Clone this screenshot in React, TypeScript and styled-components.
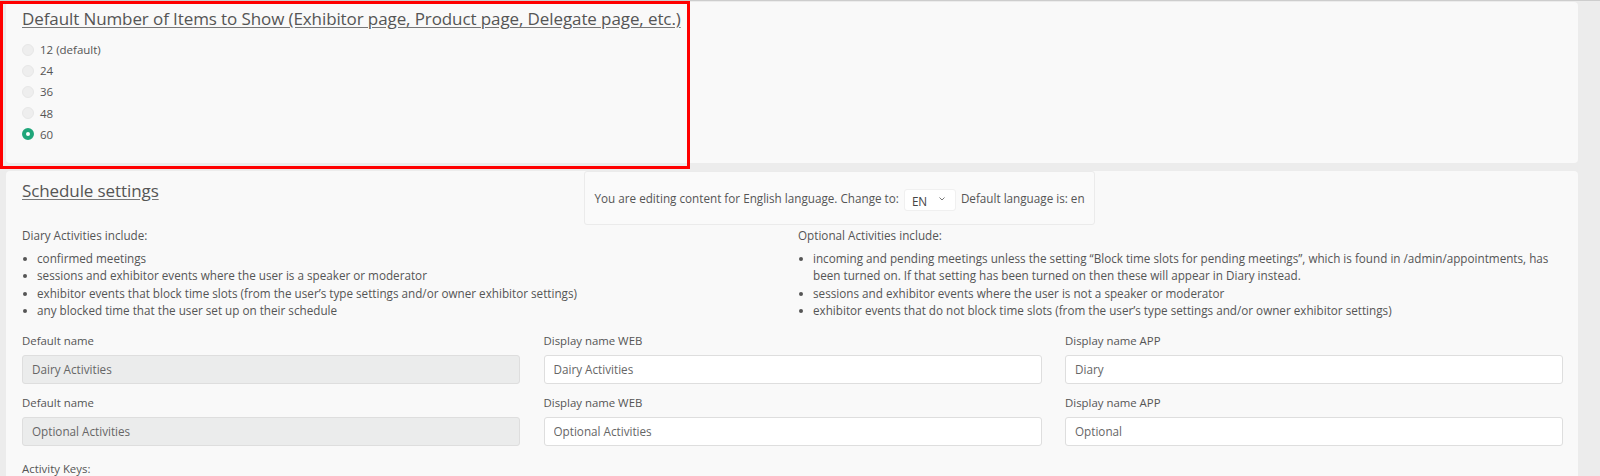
import styled, { createGlobalStyle } from "styled-components";

const GlobalStyle = createGlobalStyle`
  html, body {
    margin: 0;
    padding: 0;
    background: #ececec;
    font-family: "Open Sans", "Liberation Sans", sans-serif;
    color: #555;
  }
  * {
    box-sizing: border-box;
  }
`;

type ItemOption = {
  value: number;
  label: string;
};

const ITEM_OPTIONS: ItemOption[] = [
  { value: 12, label: "12 (default)" },
  { value: 24, label: "24" },
  { value: 36, label: "36" },
  { value: 48, label: "48" },
  { value: 60, label: "60" },
];

const DIARY_ITEMS = [
  "confirmed meetings",
  "sessions and exhibitor events where the user is a speaker or moderator",
  "exhibitor events that block time slots (from the user\u2019s type settings and/or owner exhibitor settings)",
  "any blocked time that the user set up on their schedule",
];

const OPTIONAL_ITEMS = [
  "incoming and pending meetings unless the setting \u201CBlock time slots for pending meetings\u201D, which is found in /admin/appointments, has been turned on. If that setting has been turned on then these will appear in Diary instead.",
  "sessions and exhibitor events where the user is not a speaker or moderator",
  "exhibitor events that do not block time slots (from the user\u2019s type settings and/or owner exhibitor settings)",
];

const NAME_ROWS = [
  { id: "diary", defaultName: "Dairy Activities", web: "Dairy Activities", app: "Diary" },
  { id: "optional", defaultName: "Optional Activities", web: "Optional Activities", app: "Optional" },
];

const App = () => {
  const selected = 60;

  return (
    <>
      <GlobalStyle />
      <Page>
        <ItemsCard>
          <SectionTitle>
            Default Number of Items to Show (Exhibitor page, Product page, Delegate page, etc.)
          </SectionTitle>
          <RadioList>
            {ITEM_OPTIONS.map((option) => (
              <RadioRow key={option.value}>
                <Radio $checked={option.value === selected} />
                <span>{option.label}</span>
              </RadioRow>
            ))}
          </RadioList>
        </ItemsCard>

        <ScheduleCard>
          <Header>
            <HeaderTitle>Schedule settings</HeaderTitle>
            <LanguageBox>
              <span>You are editing content for English language. Change to:</span>
              <LanguageSelect>
                <span>EN</span>
                <svg width="6" height="4" viewBox="0 0 6 4">
                  <polyline points="0.5,0.5 3,3 5.5,0.5" fill="none" stroke="#777" strokeWidth="1" />
                </svg>
              </LanguageSelect>
              <span>Default language is: en</span>
            </LanguageBox>
          </Header>

          <ActivityColumns>
            <div>
              <Intro>Diary Activities include:</Intro>
              <BulletList>
                {DIARY_ITEMS.map((item) => (
                  <Bullet key={item}>{item}</Bullet>
                ))}
              </BulletList>
            </div>
            <div>
              <Intro>Optional Activities include:</Intro>
              <BulletList>
                {OPTIONAL_ITEMS.map((item) => (
                  <Bullet key={item}>{item}</Bullet>
                ))}
              </BulletList>
            </div>
          </ActivityColumns>

          <NameGrid>
            {NAME_ROWS.flatMap((row) => [
              <Field key={row.id + "-default"}>
                <FieldLabel>Default name</FieldLabel>
                <TextInput $disabled readOnly value={row.defaultName} />
              </Field>,
              <Field key={row.id + "-web"}>
                <FieldLabel>Display name WEB</FieldLabel>
                <TextInput readOnly value={row.web} />
              </Field>,
              <Field key={row.id + "-app"}>
                <FieldLabel>Display name APP</FieldLabel>
                <TextInput readOnly value={row.app} />
              </Field>,
            ])}
          </NameGrid>

          <KeysLabel>Activity Keys:</KeysLabel>
        </ScheduleCard>

        <Highlight />
      </Page>
    </>
  );
};

const Page = styled.div`
  position: relative;
  border-top: 1px solid #cdcdcd;
  padding: 1px 22px 0 6px;
  height: 476px;
  overflow: hidden;
`;

const Highlight = styled.div`
  position: absolute;
  left: 0;
  top: 0;
  width: 690px;
  height: 168px;
  border: 3px solid #ff0000;
  pointer-events: none;
`;

const ItemsCard = styled.div`
  height: 161px;
  background: #f9f9f9;
  border-radius: 4px;
  padding: 5px 16px 0;
`;

const SectionTitle = styled.h3`
  margin: 0;
  font-size: 17px;
  line-height: 24px;
  font-weight: 400;
  color: #555;
  text-decoration: underline;
  text-decoration-color: #777;
  text-underline-offset: 2px;
  letter-spacing: -0.1px;
`;

const HeaderTitle = styled(SectionTitle)`
  margin-top: 8px;
`;

const RadioList = styled.div`
  display: flex;
  flex-direction: column;
  margin-top: 8px;
`;

const RadioRow = styled.label`
  display: flex;
  align-items: center;
  gap: 6px;
  height: 21.2px;
  font-size: 11.5px;
  color: #555;
`;

const Radio = styled.span<{ $checked?: boolean }>`
  width: 12px;
  height: 12px;
  border-radius: 50%;
  flex: none;
  background: ${(p) => (p.$checked ? "#ffffff" : "#eeeeee")};
  border: ${(p) => (p.$checked ? "4px solid #1fa67a" : "1px solid #e7e7e7")};
`;

const ScheduleCard = styled.div`
  margin-top: 8px;
  background: #f9f9f9;
  border-radius: 4px 4px 0 0;
  padding: 0 15px 0 16px;
  height: 320px;
`;

const Header = styled.div`
  display: grid;
  grid-template-columns: 561.5px 511.5px;
  align-items: start;
`;

const LanguageBox = styled.div`
  height: 54px;
  display: flex;
  align-items: center;
  gap: 5px;
  padding-left: 10px;
  background: #fafafa;
  border: 1px solid #ebebeb;
  border-radius: 3px;
  font-size: 11.7px;
  color: #555;
`;

const LanguageSelect = styled.div`
  width: 52px;
  height: 22px;
  margin-top: 3px;
  display: flex;
  align-items: center;
  justify-content: space-between;
  padding: 3px 10px 0 7px;
  background: #ffffff;
  border: 1px solid #f0f0f0;
  border-radius: 3px;
  font-size: 11.7px;
  color: #444;

  svg {
    margin-top: -4px;
  }
`;

const ActivityColumns = styled.div`
  display: grid;
  grid-template-columns: 1fr 1fr;
  column-gap: 11px;
  margin-top: 2px;
  font-size: 11.7px;
  line-height: 17.6px;
  color: #555;
`;

const Intro = styled.p`
  margin: 0;
`;

const BulletList = styled.ul`
  margin: 5px 0 0;
  padding: 0;
  list-style: none;
`;

const Bullet = styled.li`
  display: flex;

  &::before {
    content: "";
    flex: none;
    width: 4px;
    height: 4px;
    margin: 7px 10px 0 1px;
    border-radius: 50%;
    background: #555;
  }
`;

const NameGrid = styled.div`
  display: grid;
  grid-template-columns: repeat(3, 1fr);
  column-gap: 23.5px;
  row-gap: 10px;
  margin-top: 12px;
`;

const Field = styled.div`
  display: flex;
  flex-direction: column;
`;

const FieldLabel = styled.span`
  font-size: 11.4px;
  line-height: 17.6px;
  color: #555;
`;

const TextInput = styled.input<{ $disabled?: boolean }>`
  width: 100%;
  height: 29px;
  margin-top: 5.4px;
  padding: 0 9px;
  border: 1px solid #dedede;
  border-radius: 3px;
  background: ${(p) => (p.$disabled ? "#ebecec" : "#ffffff")};
  font-family: "Open Sans", "Liberation Sans", sans-serif;
  font-size: 11.7px;
  color: #666;
  outline: none;
`;

const KeysLabel = styled.p`
  margin: 14px 0 0;
  font-size: 11.4px;
  line-height: 17.6px;
  color: #555;
`;

export default App;
